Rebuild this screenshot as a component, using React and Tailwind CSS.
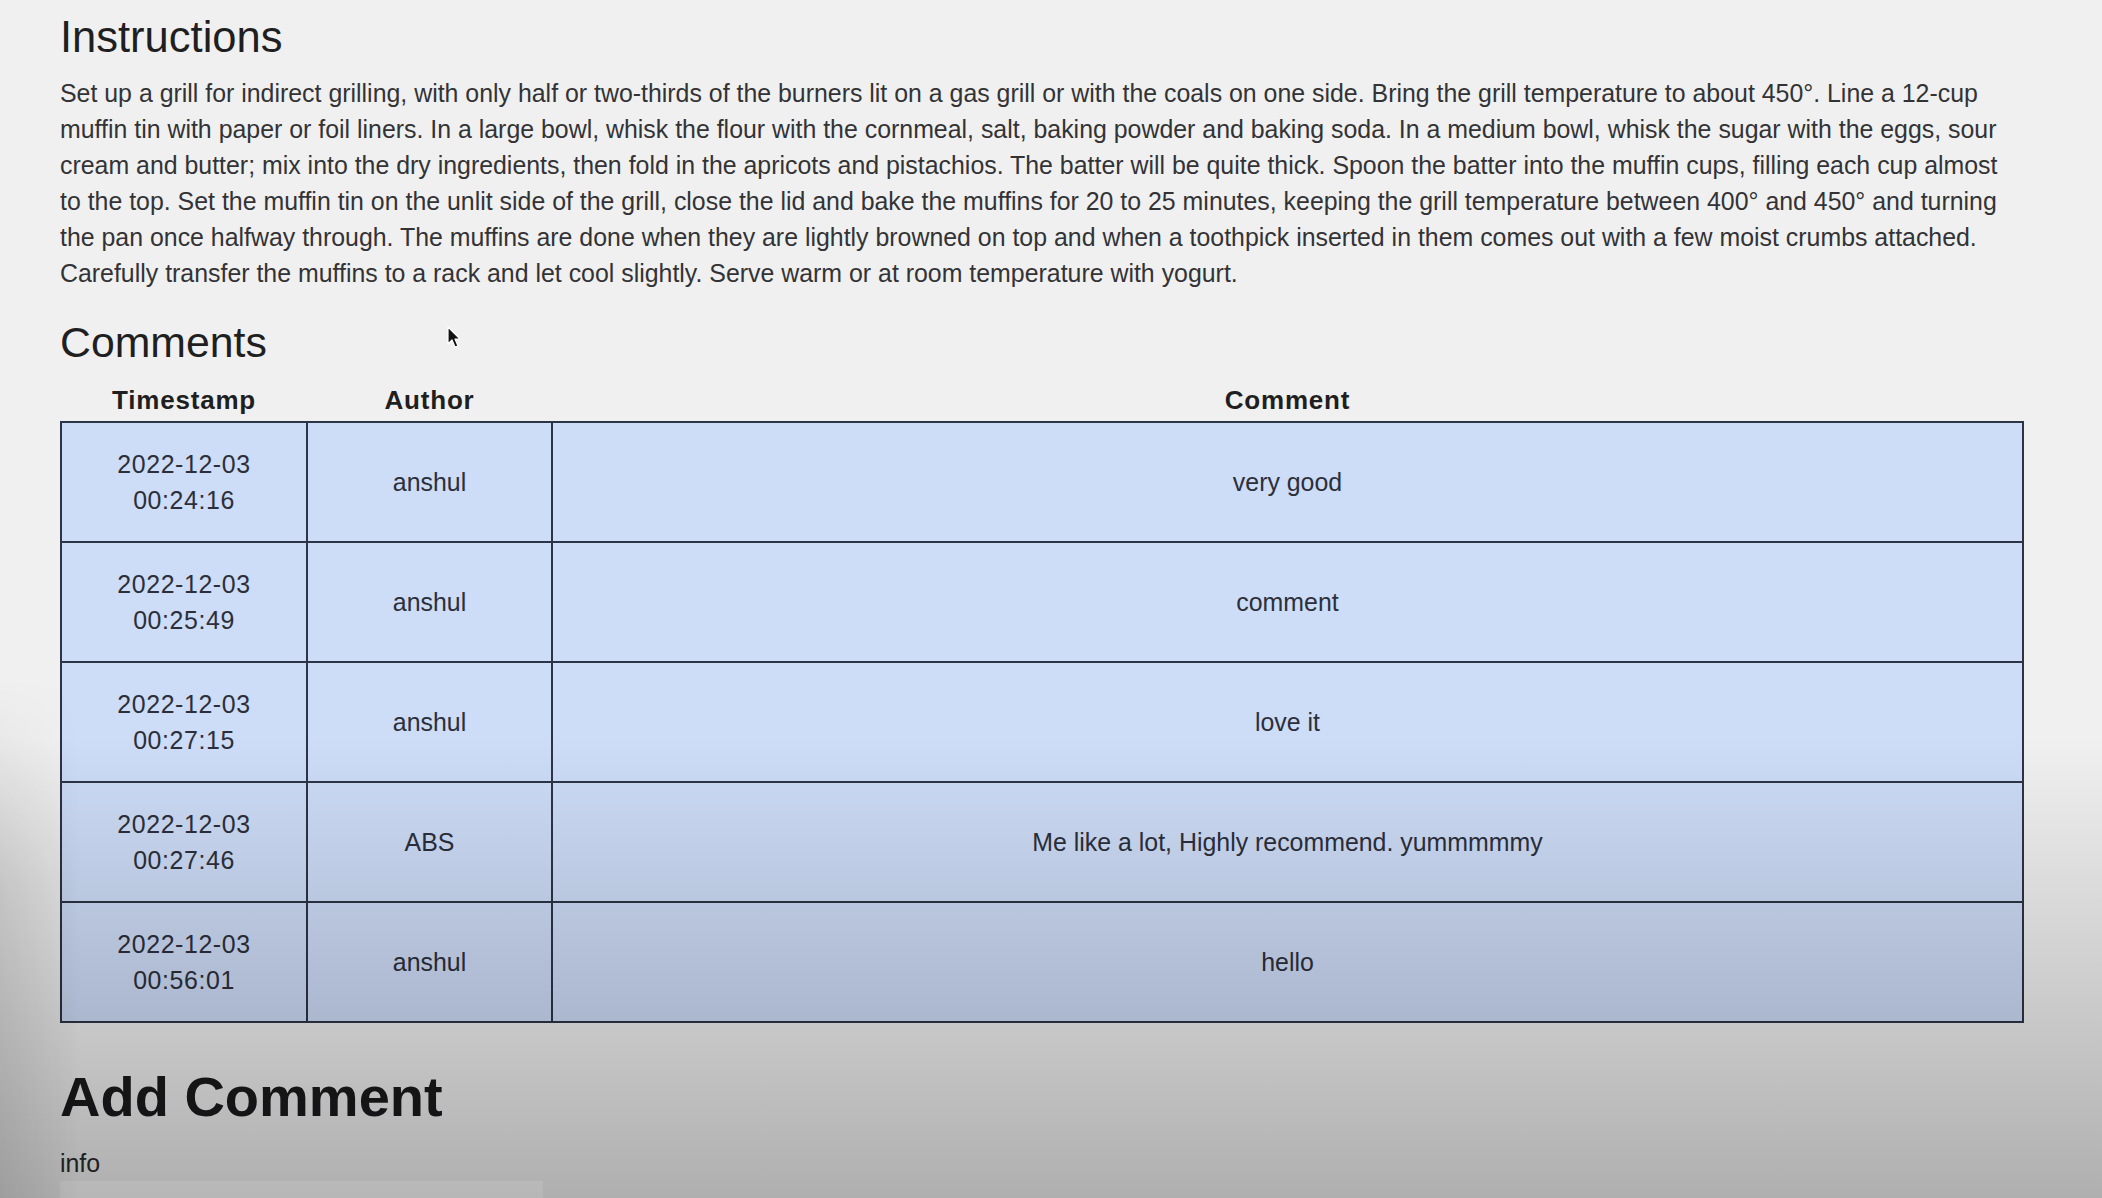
import React from 'react';

const instructionLines = [
  'Set up a grill for indirect grilling, with only half or two-thirds of the burners lit on a gas grill or with the coals on one side. Bring the grill temperature to about 450°. Line a 12-cup',
  'muffin tin with paper or foil liners. In a large bowl, whisk the flour with the cornmeal, salt, baking powder and baking soda. In a medium bowl, whisk the sugar with the eggs, sour',
  'cream and butter; mix into the dry ingredients, then fold in the apricots and pistachios. The batter will be quite thick. Spoon the batter into the muffin cups, filling each cup almost',
  'to the top. Set the muffin tin on the unlit side of the grill, close the lid and bake the muffins for 20 to 25 minutes, keeping the grill temperature between 400° and 450° and turning',
  'the pan once halfway through. The muffins are done when they are lightly browned on top and when a toothpick inserted in them comes out with a few moist crumbs attached.',
  'Carefully transfer the muffins to a rack and let cool slightly. Serve warm or at room temperature with yogurt.',
];

const comments = [
  { date: '2022-12-03', time: '00:24:16', author: 'anshul', text: 'very good' },
  { date: '2022-12-03', time: '00:25:49', author: 'anshul', text: 'comment' },
  { date: '2022-12-03', time: '00:27:15', author: 'anshul', text: 'love it' },
  { date: '2022-12-03', time: '00:27:46', author: 'ABS', text: 'Me like a lot, Highly recommend. yummmmmy' },
  { date: '2022-12-03', time: '00:56:01', author: 'anshul', text: 'hello' },
];

// flecha del raton que aparece en la captura
const Cursor = () => (
  <svg className="absolute left-[447px] top-[326px]" width="16" height="24" viewBox="0 0 16 24">
    <path d="M1 1 L1 18 L5 14 L8 21 L11 20 L8 13 L13 13 Z" fill="#111" stroke="#fff" strokeWidth="1.2" strokeLinejoin="round" />
  </svg>
);

export default function App() {
  return (
    <div className="relative h-[1198px] overflow-hidden bg-[#f0f0f0] font-['Liberation_Sans',Arial,sans-serif] text-[#2a2a2e]">
      <div className="ml-[60px] w-[1964px]">
        <h2 className="mt-[16px] text-[43.5px] leading-[42px] text-[#1f1f22]">Instructions</h2>
        <p className="mt-[17px] text-[24.9px] leading-[36px] text-[#333336]">
          {instructionLines.map((line, i) => (
            <span key={i} className="block whitespace-nowrap">{line}</span>
          ))}
        </p>

        <h2 className="mt-[30px] text-[42.8px] leading-[42px] text-[#1f1f22]">Comments</h2>
        <table className="mt-[15px] w-full table-fixed border-collapse text-[24.9px] leading-[36px]">
          <colgroup>
            <col className="w-[246px]" />
            <col className="w-[245px]" />
            <col />
          </colgroup>
          <thead>
            <tr>
              <th className="pt-[4px] pb-[3px] text-[26px] font-bold tracking-[0.8px] text-[#1f1f22]">Timestamp</th>
              <th className="pt-[4px] pb-[3px] text-[26px] font-bold tracking-[0.8px] text-[#1f1f22]">Author</th>
              <th className="pt-[4px] pb-[3px] text-[26px] font-bold tracking-[0.8px] text-[#1f1f22]">Comment</th>
            </tr>
          </thead>
          <tbody>
            {comments.map((c, i) => (
              <tr key={i} className="bg-[#cddcf7]">
                <td className="h-[120px] border-2 border-[#2c3446] text-center align-middle tracking-[0.6px] text-[#2c2f3a]">
                  <span className="block">{c.date}</span>
                  <span className="block">{c.time}</span>
                </td>
                <td className="border-2 border-[#2c3446] text-center align-middle text-[#2c2f3a]">{c.author}</td>
                <td className="border-2 border-[#2c3446] text-center align-middle text-[#2c2f3a]">{c.text}</td>
              </tr>
            ))}
          </tbody>
        </table>

        <h1 className="mt-[46px] text-[56px] leading-[56px] font-bold text-[#1a1a1c]">Add Comment</h1>
        <label className="mt-[20px] block text-[24.9px] leading-[36px] text-[#2a2a2e]">info</label>
        <input className="block h-[44px] w-[483px] bg-[#fafafa] outline-none" />
      </div>

      <Cursor />

      {/* oscurecido inferior del video */}
      <div className="pointer-events-none absolute bottom-0 left-0 right-0 h-[460px] bg-linear-to-b from-transparent to-black/27"></div>
      <div className="pointer-events-none absolute bottom-0 left-0 h-[520px] w-[80px] bg-linear-to-r from-black/10 to-transparent [mask-image:linear-gradient(to_bottom,transparent,black_40%)]"></div>
    </div>
  );
}
